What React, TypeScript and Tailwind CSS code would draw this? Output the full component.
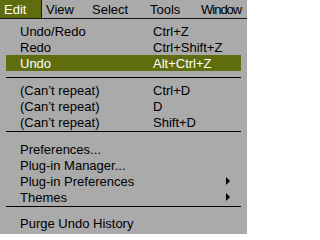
import { ReactNode } from 'react';

const barItems = [
  { label: 'Edit', w: 'w-[42px]', active: true },
  { label: 'View', w: 'w-[46px]' },
  { label: 'Select', w: 'w-[58px]' },
  { label: 'Tools', w: 'w-[51px]' },
  { label: 'Window', w: 'w-[50px] tracking-[-1px]' },
];

function Arrow() {
  return (
    <svg width="5" height="8" viewBox="0 0 5 8" className="block">
      <path d="M0 0 L4 4 L0 8 Z" fill="#000" />
    </svg>
  );
}

function Item({ label, shortcut, active, sub }: { label: string; shortcut?: string; active?: boolean; sub?: boolean }) {
  return (
    <div
      className={
        'flex h-[16px] items-center pl-[14px] pr-[10px] ' +
        (active ? 'bg-[#5f6d0e] text-white' : 'text-black')
      }
    >
      <span className="w-[133px] shrink-0 whitespace-nowrap">{label}</span>
      {shortcut && <span className="whitespace-nowrap">{shortcut}</span>}
      {sub && (
        <span className="ml-auto">
          <Arrow />
        </span>
      )}
    </div>
  );
}

function Sep({ className }: { className: string }) {
  return <div className={'h-px bg-black ' + className} />;
}

function Group({ children }: { children: ReactNode }) {
  return <div className="flex flex-col">{children}</div>;
}

export default function App() {
  return (
    <div className="h-[234px] w-[247px] overflow-hidden bg-[#aaaaaa] text-[13px] leading-none" style={{ fontFamily: '"Liberation Sans", Arial, sans-serif' }}>
      <div className="flex h-[19px] border-b border-[#1a1a1a]">
        {barItems.map(b => (
          <div
            key={b.label}
            className={
              'flex shrink-0 items-center pl-[4px] ' +
              b.w +
              (b.active ? ' border-r border-[#1a1a1a] bg-[#5f6d0e] text-white' : ' text-black')
            }
          >
            {b.label}
          </div>
        ))}
      </div>

      <div className="px-[6px] pt-[4px]">
        <Group>
          <Item label="Undo/Redo" shortcut="Ctrl+Z" />
          <Item label="Redo" shortcut="Ctrl+Shift+Z" />
          <Item label="Undo" shortcut="Alt+Ctrl+Z" active />
        </Group>
        <Sep className="mt-[6px] mb-[4px]" />
        <Group>
          <Item label="(Can’t repeat)" shortcut="Ctrl+D" />
          <Item label="(Can’t repeat)" shortcut="D" />
          <Item label="(Can’t repeat)" shortcut="Shift+D" />
        </Group>
        <Sep className="mt-[1px] mb-[9px]" />
        <Group>
          <Item label="Preferences..." />
          <Item label="Plug-in Manager..." />
          <Item label="Plug-in Preferences" sub />
          <Item label="Themes" sub />
        </Group>
        <Sep className="mt-[1px] mb-[8px]" />
        <Group>
          <Item label="Purge Undo History" />
        </Group>
      </div>
    </div>
  );
}
